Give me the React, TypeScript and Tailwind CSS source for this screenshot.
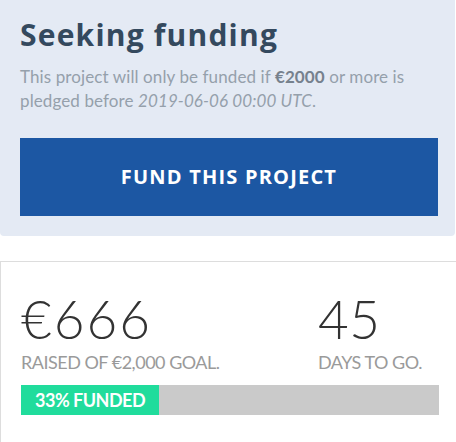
const heading = { fontFamily: '"Open Sans", "Liberation Sans", sans-serif' };

export default function App() {
  return (
    <div className="w-[456px] h-[442px] overflow-hidden bg-white font-['Lato','Liberation_Sans',sans-serif]">
      <section className="w-[455px] rounded-b-[4px] bg-[#e4eaf4] pl-5 pt-[17px] pb-5">
        <h2 style={heading} className="text-[30px] leading-[36px] font-bold tracking-[1.2px] text-[#34495e]">
          Seeking funding
        </h2>
        <p className="mt-3 w-[420px] text-[17px] leading-6 tracking-[0.1px] text-[#95a0ab]">
          This project will only be funded if{" "}
          <strong className="font-bold text-[#76818d]">€2000</strong> or more is pledged before{" "}
          <em>2019-06-06 00:00 UTC</em>.
        </p>
        <button
          style={heading}
          className="mt-[25px] flex h-[78px] w-[418px] items-center justify-center bg-[#1c57a3] text-[20px] font-bold tracking-[1.2px] text-white"
        >
          FUND THIS PROJECT
        </button>
      </section>

      <section className="mt-[25px] w-[460px] border border-[#dddddd] px-5 pt-[26px] pb-[27px]">
        <div className="flex">
          <div className="w-[297px]">
            <div className="text-[53px] leading-[62px] font-light tracking-[2px] text-[#333333]">€666</div>
            <div className="text-[18px] leading-6 uppercase tracking-[-0.5px] text-[#9a9a9a]">
              Raised of €2,000 goal.
            </div>
          </div>
          <div>
            <div className="text-[53px] leading-[62px] font-light tracking-[0.5px] text-[#333333]">45</div>
            <div className="text-[18px] leading-6 uppercase tracking-[-0.5px] text-[#9a9a9a]">
              Days to go.
            </div>
          </div>
        </div>
        <div className="mt-[11px] flex h-[30px] w-[418px] bg-[#cacaca]">
          <div className="flex w-[138px] items-center bg-[#20dc9c] pl-[14px] text-[18px] font-bold tracking-[-0.5px] text-white">
            33% FUNDED
          </div>
        </div>
      </section>
    </div>
  );
}
